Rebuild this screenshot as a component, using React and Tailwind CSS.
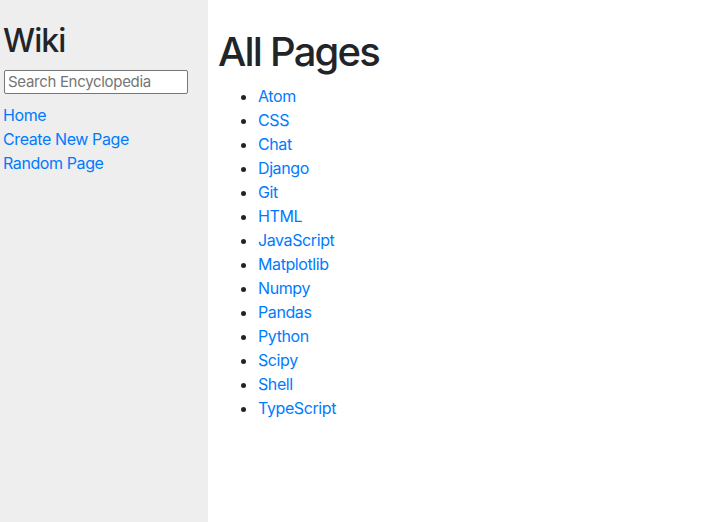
import React from "react";

const pages = ["Atom", "CSS", "Chat", "Django", "Git", "HTML", "JavaScript", "Matplotlib", "Numpy", "Pandas", "Python", "Scipy", "Shell", "TypeScript"];

export default function App() {
    return (
        <div className="flex min-h-[522px] w-full text-[#212529] font-['Inter','Liberation_Sans',sans-serif] text-base leading-6 tracking-[-0.025em]">
            {/* sidebar */}
            <div className="w-[208px] shrink-0 bg-[#eeeeee] pl-[3px] pt-[22px]">
                <h2 className="text-[32px] leading-[38px] font-medium mb-[9px] tracking-[-0.03em]">Wiki</h2>
                <input
                    type="text"
                    placeholder="Search Encyclopedia"
                    className="ml-[1px] w-[184px] h-[24px] border border-[#767676] rounded-[2px] bg-white px-[3px] text-[15px] tracking-[-0.02em] placeholder:text-[#757575] outline-none"
                />
                <div className="mt-[9px] flex flex-col">
                    <a href="#" className="text-[#007bff] leading-6">Home</a>
                    <a href="#" className="text-[#007bff] leading-6">Create New Page</a>
                    <a href="#" className="text-[#007bff] leading-6">Random Page</a>
                </div>
            </div>

            {/* main */}
            <div className="flex-1 pl-[10px] pt-[28px]">
                <h1 className="text-[40px] leading-[48px] font-medium mb-[8px] tracking-[-0.045em]">All Pages</h1>
                <ul className="list-disc pl-[40px]">
                    {pages.map((p) => (
                        <li key={p} className="leading-6">
                            <a href="#" className="text-[#007bff]">{p}</a>
                        </li>
                    ))}
                </ul>
            </div>
        </div>
    );
}
